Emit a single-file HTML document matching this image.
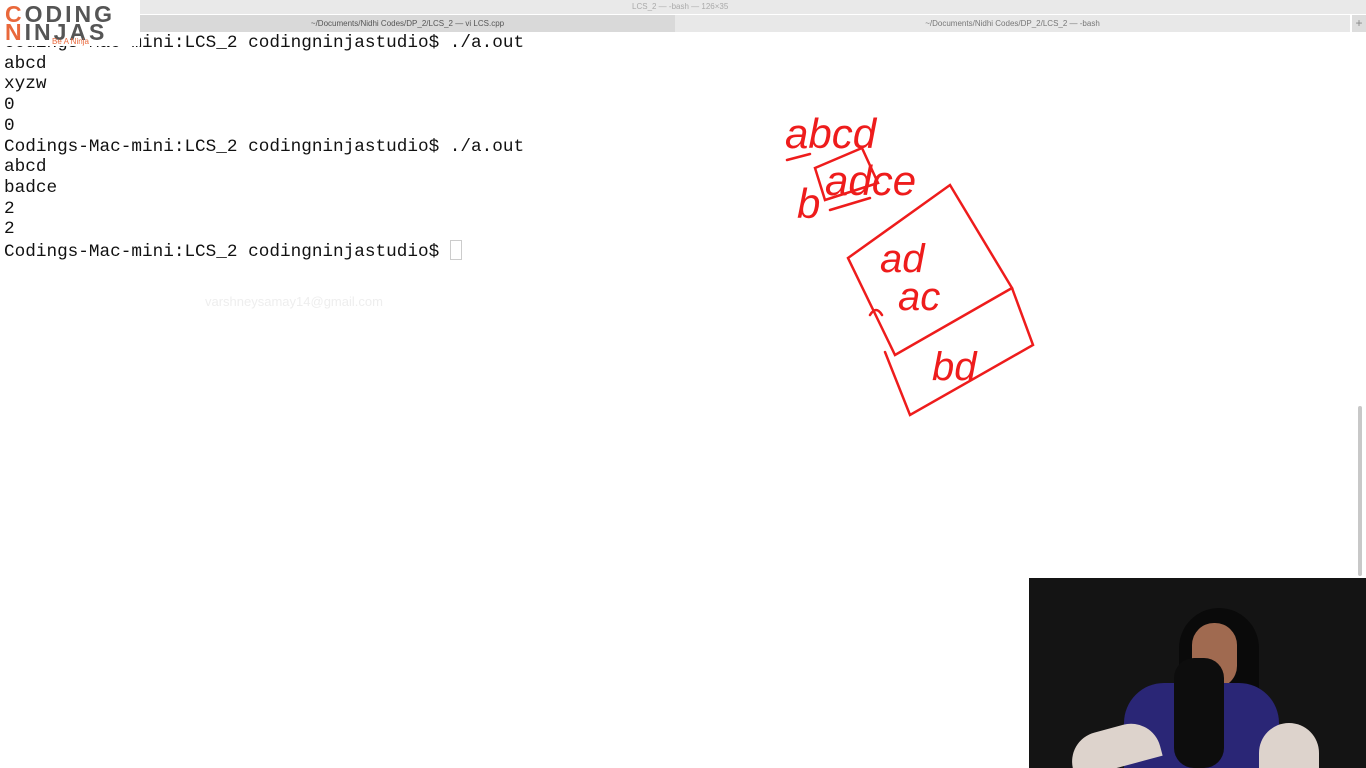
<!DOCTYPE html>
<html><head><style>
body{margin:0;width:1366px;height:768px;overflow:hidden;background:#fff;position:relative;font-family:"Liberation Sans",sans-serif}
.top{position:absolute;left:0;top:0;width:1366px;height:14px;background:#e9e9e9}
.tab1{position:absolute;left:140px;top:15px;width:535px;height:17px;background:#d9d9d9;font-size:8px;color:#555;text-align:center;line-height:17px}
.tab2{position:absolute;left:675px;top:15px;width:675px;height:17px;background:#e8e8e8;font-size:8px;color:#777;text-align:center;line-height:17px}
.term{position:absolute;left:4px;top:33px;font-family:"Liberation Mono",monospace;font-size:17.7px;line-height:20.7px;color:#111;white-space:pre}
.logo{position:absolute;left:0;top:0;width:140px;height:46px;background:#fff}
.cam{position:absolute;left:1029px;top:578px;width:337px;height:190px;background:#141414;overflow:hidden}
</style></head><body>
<div class="top"><span style="position:absolute;left:632px;top:2px;font-size:8px;color:#aaa">LCS_2 — -bash — 126×35</span></div>
<div class="tab1">~/Documents/Nidhi Codes/DP_2/LCS_2 — vi LCS.cpp</div>
<div style="position:absolute;left:680px;top:17px;font-size:9px;color:#999">×</div>
<div class="tab2">~/Documents/Nidhi Codes/DP_2/LCS_2 — -bash</div>
<div style="position:absolute;left:1352px;top:15px;width:14px;height:17px;background:#ddd;font-size:12px;color:#888;text-align:center;line-height:17px">+</div>
<div style="position:absolute;left:1358px;top:406px;width:4px;height:170px;background:#c8c8c8;border-radius:2px"></div>
<div class="term">Codings-Mac-mini:LCS_2 codingninjastudio$ ./a.out
abcd
xyzw
0
0
Codings-Mac-mini:LCS_2 codingninjastudio$ ./a.out
abcd
badce
2
2
Codings-Mac-mini:LCS_2 codingninjastudio$ <span style="display:inline-block;width:10px;height:18px;border:1px solid #ccc;vertical-align:-4px"></span></div>
<div class="logo">
<div style="position:absolute;left:5px;top:1px;font-size:23px;font-weight:bold;color:#555;letter-spacing:3px"><span style="color:#e9683b">C</span>ODING</div>
<div style="position:absolute;left:5px;top:19px;font-size:23px;font-weight:bold;color:#555;letter-spacing:3px"><span style="color:#e9683b">N</span>INJAS</div>
<div style="position:absolute;left:52px;top:37px;font-size:8px;color:#e9683b">Be A Ninja</div>
</div>
<div style="position:absolute;left:205px;top:294px;font-size:13px;color:#eee">varshneysamay14@gmail.com</div>
<svg style="position:absolute;left:0;top:0" width="1366" height="768" fill="none" stroke="#ee1c1c" stroke-width="2.5" stroke-linecap="round">
<text x="785" y="148" font-family="Liberation Sans" font-size="42" fill="#ee1c1c" stroke="none" font-style="italic">abcd</text>
<text x="797" y="218" font-family="Liberation Sans" font-size="42" fill="#ee1c1c" stroke="none" font-style="italic">b</text>
<text x="825" y="195" font-family="Liberation Sans" font-size="42" fill="#ee1c1c" stroke="none" font-style="italic">adce</text>
<text x="880" y="272" font-family="Liberation Sans" font-size="40" fill="#ee1c1c" stroke="none" font-style="italic">ad</text>
<text x="898" y="310" font-family="Liberation Sans" font-size="40" fill="#ee1c1c" stroke="none" font-style="italic">ac</text>
<text x="932" y="380" font-family="Liberation Sans" font-size="40" fill="#ee1c1c" stroke="none" font-style="italic">bd</text>
<path d="M787 160 L810 154"/>
<path d="M815 168 L862 148 L878 183 L825 200 Z"/>
<path d="M830 210 L870 198"/>
<path d="M848 258 L950 185 L1012 288 L895 355 Z"/>
<path d="M1012 288 L1033 345 L910 415 L885 352"/>
<path d="M870 315 Q876 305 882 315"/>
</svg>
<div class="cam">
<div style="position:absolute;left:150px;top:30px;width:80px;height:170px;background:#0a0a0a;border-radius:40px 40px 0 0"></div>
<div style="position:absolute;left:163px;top:45px;width:45px;height:65px;background:#a06a50;border-radius:22px"></div>
<div style="position:absolute;left:95px;top:105px;width:155px;height:100px;background:#2a2676;border-radius:40px 40px 0 0"></div>
<div style="position:absolute;left:40px;top:150px;width:90px;height:40px;background:#ddd3cc;border-radius:30px 30px 0 0;transform:rotate(-15deg)"></div>
<div style="position:absolute;left:230px;top:145px;width:60px;height:45px;background:#ddd3cc;border-radius:30px 30px 0 0"></div>
<div style="position:absolute;left:145px;top:80px;width:50px;height:110px;background:#0d0d0d;border-radius:20px"></div>
</div>
</body></html>
